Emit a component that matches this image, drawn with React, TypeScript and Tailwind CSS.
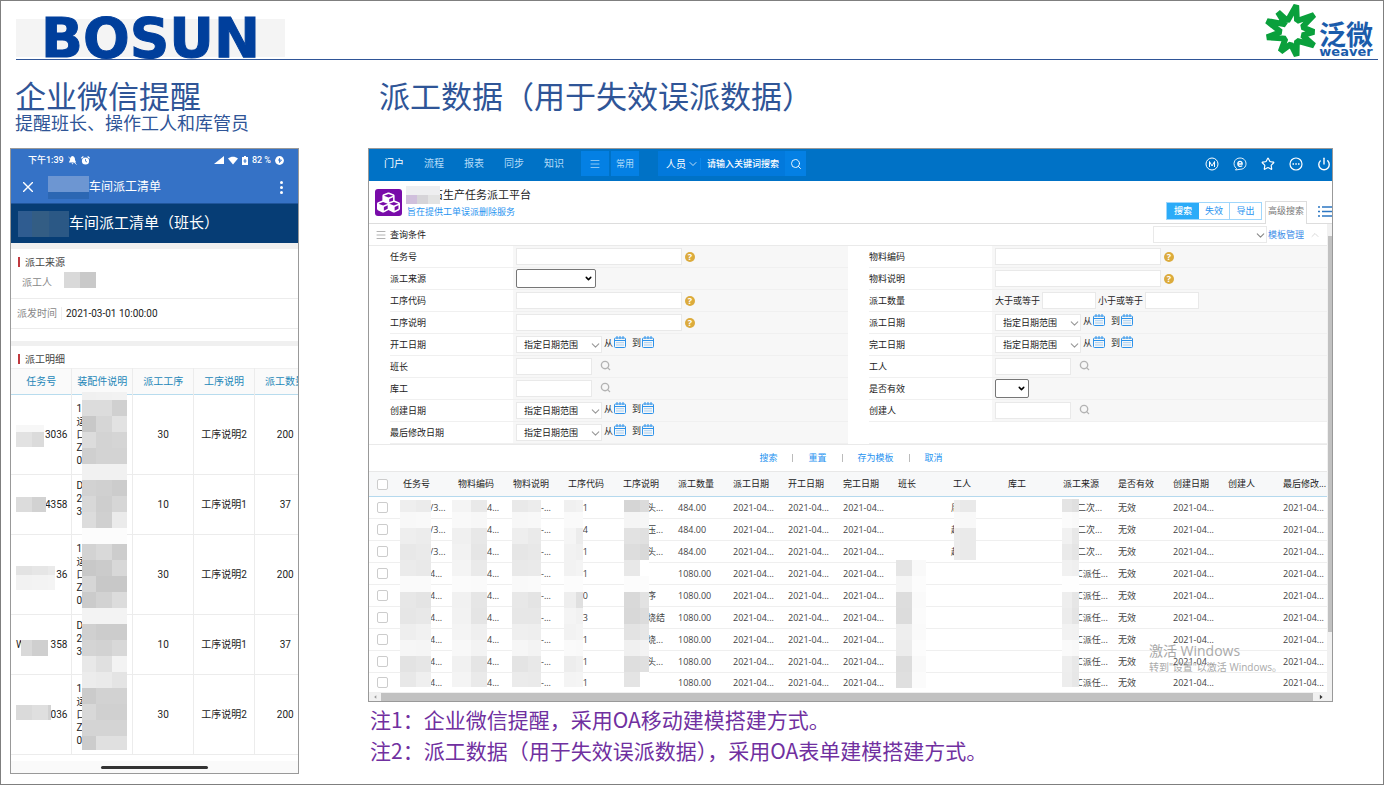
import React from 'react';
import { FaCubes } from 'react-icons/fa';
import { Search, ChevronDown, ChevronUp, Star, Power, Menu } from 'lucide-react';

interface MosaicProps {
  className: string;
  widths: number[];
  heights: number[];
  shades: string[]; // one string per band, two hex digits per block
}

// Grey blocks that hide private data
const Mosaic: React.FC<MosaicProps> = ({ className, widths, heights, shades }) => {
  const width = widths.reduce((a, b) => a + b, 0);
  const height = heights.reduce((a, b) => a + b, 0);
  const blocks: React.ReactNode[] = [];
  let y = 0;
  shades.forEach((band, r) => {
    let x = 0;
    band.split(' ').forEach((s, c) => {
      blocks.push(
        <rect key={`${r}-${c}`} x={x} y={y} width={widths[c]} height={heights[r]} fill={`#${s}${s}${s}`} />
      );
      x += widths[c];
    });
    y += heights[r];
  });
  return (
    <svg
      className={`absolute max-w-none ${className}`}
      width={width}
      height={height}
      shapeRendering="crispEdges"
      aria-hidden="true"
    >
      {blocks}
    </svg>
  );
};

const WeaverLogo = () => (
  <div className="flex h-[54px] items-end gap-[3px] pr-[5px]">
    <svg viewBox="0 0 150 156" className="h-[53px] w-[51px]" aria-hidden="true">
      <path
        d="M38 24 L66 50 L92 4 L94 50 L144 32 L110 68 L144 82 L110 92 L144 122 L94 108 L93 152 L76 118 L46 140 L60 102 L6 98 L46 82 L6 50 L60 60 Z"
        fill="none"
        stroke="#0aa03c"
        strokeWidth="17"
        strokeLinejoin="bevel"
      />
    </svg>
    <div className="flex flex-col items-center text-[#1b5cab]">
      <span className="text-[27px] leading-[27px] font-bold">泛微</span>
      <span className="font-['DejaVu_Sans',sans-serif] text-[13px] leading-[10px] font-bold">weaver</span>
    </div>
  </div>
);

const CalendarIcon = () => (
  <svg viewBox="0 0 12 12" className="size-3 text-[#2e93ea]" fill="none" stroke="currentColor" aria-hidden="true">
    <rect x="0.5" y="2" width="11" height="9.5" rx="1" />
    <path d="M0.5 4.5H11.5M3 0V3M6 0V3M9 0V3" />
    <path d="M2.5 6.7H10M2.5 9H10" strokeDasharray="1 1" strokeOpacity="0.8" />
  </svg>
);

const HelpIcon = () => (
  <span className="flex size-[10px] items-center justify-center rounded-full bg-[#dcab3c] text-[9px] leading-none font-bold text-white">
    ?
  </span>
);

/* ---------- phone ---------- */

interface PhoneRow {
  no: string;
  prefix?: string;
  lines: string[];
  step: string;
  desc: string;
  qty: string;
  height: string;
  mask: MosaicProps;
}

const PHONE_HEADERS = ['任务号', '装配件说明', '派工工序', '工序说明', '派工数量'];

const LONG_PART = ['1', '运', '口', 'Z', '0'];
const SHORT_PART = ['D', '2', '3', '\u00a0'];

const PHONE_ROWS: PhoneRow[] = [
  {
    no: '3036', lines: LONG_PART, step: '30', desc: '工序说明2', qty: '200', height: 'h-[80px]',
    mask: { className: 'left-[5px] top-[30px]', widths: [16, 12], heights: [7, 15], shades: ['f7 f7', 'e2 db'] },
  },
  {
    no: '4358', lines: SHORT_PART, step: '10', desc: '工序说明1', qty: '37', height: 'h-[60px]',
    mask: { className: 'left-[5px] top-[22px]', widths: [16, 14], heights: [15], shades: ['dc d2'] },
  },
  {
    no: '36', lines: LONG_PART, step: '30', desc: '工序说明2', qty: '200', height: 'h-[80px]',
    mask: { className: 'left-[5px] top-[31px]', widths: [16, 16, 7], heights: [9, 15], shades: ['e3 e6 ea', 'f2 f3 f4'] },
  },
  {
    no: '358', prefix: 'W', lines: SHORT_PART, step: '10', desc: '工序说明1', qty: '37', height: 'h-[60px]',
    mask: { className: 'left-[10px] top-[25px]', widths: [11, 16], heights: [16], shades: ['d9 cf'] },
  },
  {
    no: '036', lines: LONG_PART, step: '30', desc: '工序说明2', qty: '200', height: 'h-[80px]',
    mask: { className: 'left-[5px] top-[30px]', widths: [16, 16, 3], heights: [15], shades: ['da df d2'] },
  },
];

const PART_MASK: MosaicProps = {
  className: 'left-[10px] -top-[3px] z-10',
  widths: [14, 16, 15],
  heights: [8, 16, 16, 16, 16, 16, 16, 16, 16, 16, 16, 16, 16, 16, 16, 16, 16, 16, 16, 16, 16, 16, 14],
  shades: [
    'f0 f1 f2', 'dc dc d0', 'c8 d6 e2', 'dc d3 d5', 'cf d3 d3', 'f1 f1 f1', 'd2 d0 cc', 'd8 ce d6',
    'dc d0 eb', 'fc fc fc', 'd3 d9 cd', 'c8 cb d8', 'd6 c8 c8', 'cb d2 dc', 'f3 f3 f3', 'd0 cc cc',
    'd4 d2 d8', 'e8 e0 f3', 'ec ea e4', 'cb d2 d2', 'd8 d0 d0', 'd4 d4 d4', 'cc e0 e0',
  ],
};

const SectionTitle: React.FC<{ text: string }> = ({ text }) => (
  <h3 className="flex h-[22px] items-center gap-[5px] bg-white pt-1 pl-[7px] text-[10px] text-[#444]">
    <span className="h-[10px] w-[2px] bg-[#c0393f]" />
    {text}
  </h3>
);

const Phone = () => (
  <section className="overflow-hidden border border-[#999] bg-white font-['Roboto','Noto_Sans_CJK_SC',sans-serif] text-[10px] leading-[13px] text-[#222]">
    <header className="bg-[#3572c6] text-white">
      <div className="flex h-[22px] items-center gap-1 pr-[14px] pl-[17px] text-[9px] font-medium">
        <span>下午1:39</span>
        <svg viewBox="0 0 9 9" className="size-[9px]" fill="currentColor" aria-hidden="true">
          <path d="M4.5 0C2.5 0.6 2 2 2 4L0.8 6.5H8.2L7 4C7 2 6.5 0.6 4.5 0ZM3.5 7.2H5.5L4.5 8.4Z" />
          <path d="M0.5 1L8.5 8.5" stroke="currentColor" strokeWidth="0.8" />
        </svg>
        <svg viewBox="0 0 9 9" className="size-[9px]" fill="currentColor" aria-hidden="true">
          <circle cx="4.5" cy="5" r="3.6" />
          <path d="M0.4 2.2L2.4 0.5M8.6 2.2L6.6 0.5" stroke="currentColor" strokeWidth="1.2" />
          <path d="M4.5 3V5.2L6 6" stroke="#3572c6" strokeWidth="0.8" fill="none" />
        </svg>
        <span className="flex-1" />
        <svg viewBox="0 0 10 9" className="h-[9px] w-[10px]" fill="currentColor" aria-hidden="true">
          <path d="M10 0V8H0Z" />
        </svg>
        <svg viewBox="0 0 10 9" className="h-[9px] w-[10px]" fill="currentColor" aria-hidden="true">
          <path d="M0 2.5C3 0.2 7 0.2 10 2.5L5 8.5Z" />
        </svg>
        <svg viewBox="0 0 6 9" className="h-[9px] w-[6px]" fill="currentColor" aria-hidden="true">
          <path d="M0 1H2V0H4V1H6V9H0Z" />
          <path d="M3 3V7M1.5 5H4.5" stroke="#3572c6" strokeWidth="1" />
        </svg>
        <span>82 %</span>
        <svg viewBox="0 0 9 9" className="size-[9px]" fill="currentColor" aria-hidden="true">
          <circle cx="4.5" cy="4.5" r="4.4" />
          <path d="M4.5 2V6.5L6.5 4H3" stroke="#3572c6" strokeWidth="0.9" fill="none" />
        </svg>
      </div>
      <div className="flex h-8 items-center pr-[15px] pl-3 text-[12px]">
        <button type="button" aria-label="关闭">
          <svg viewBox="0 0 10 10" className="size-[10px]" stroke="currentColor" strokeWidth="1.4" aria-hidden="true">
            <path d="M0 0L10 10M10 0L0 10" />
          </svg>
        </button>
        <span className="mt-[1px] ml-[15px] flex h-[23px] w-[41px] flex-col bg-[#2c67b3]">
          <span className="h-4 bg-[#6d96d2]" />
        </span>
        <h2 className="flex-1">车间派工清单</h2>
        <button type="button" aria-label="更多" className="flex flex-col gap-[2px]">
          <span className="size-[3px] rounded-full bg-white" />
          <span className="size-[3px] rounded-full bg-white" />
          <span className="size-[3px] rounded-full bg-white" />
        </button>
      </div>
    </header>

    <div className="flex h-10 items-center border-t border-[#1f559b] bg-[#063d75] pl-[7px] text-[15px] text-white">
      <span className="flex h-[26px] w-[51px] bg-[#2b5885]">
        <span className="w-[14px] bg-[#2f5c90]" />
        <span className="w-[17px] bg-[#335d84]" />
      </span>
      车间派工清单（班长）
    </div>

    <div className="h-[6px] bg-[#f0f0f0]" />
    <SectionTitle text="派工来源" />
    <div className="flex h-[28px] items-center border-b border-[#ececec] pb-1 pl-[11px] text-[#888]">
      <span className="w-[42px]">派工人</span>
      <span className="mb-[5px] flex h-4 w-8 bg-[#c9c9c9]">
        <span className="w-4 bg-[#d9d9d9]" />
      </span>
    </div>
    <div className="flex h-[30px] items-center border-b border-[#ececec] pl-[6px] text-[#888]">
      <span className="w-[45px] border-r border-[#eee]">派发时间</span>
      <span className="pl-1 text-[#222]">2021-03-01 10:00:00</span>
    </div>
    <div className="h-3" />
    <div className="h-[5px] bg-[#f0f0f0]" />
    <SectionTitle text="派工明细" />

    <table className="w-[305px] table-fixed border-collapse">
      <thead>
        <tr className="h-[26px] border-t border-b border-t-[#f0f0f0] border-b-[#b8dcee] bg-[#fafafa] text-[#2487b8]">
          {PHONE_HEADERS.map(h => (
            <th key={h} className="border-r border-[#ececec] p-0 text-center font-normal whitespace-nowrap">
              {h}
            </th>
          ))}
        </tr>
      </thead>
      <tbody>
        {PHONE_ROWS.map((row, i) => (
          <tr key={i} className={`border-b border-[#ececec] ${row.height}`}>
            <td className="relative border-r border-[#ececec] py-0 pr-1 pl-[5px]">
              <div className="flex justify-between">
                <span>{row.prefix}</span>
                <span>{row.no}</span>
              </div>
              <Mosaic {...row.mask} />
            </td>
            <td className="relative border-r border-[#ececec] py-0 pr-0 pl-1">
              {row.lines.map((line, n) => (
                <div key={n}>{line}</div>
              ))}
              {i === 0 && <Mosaic {...PART_MASK} />}
            </td>
            <td className="border-r border-[#ececec] p-0 text-center">{row.step}</td>
            <td className="border-r border-[#ececec] p-0 text-center">{row.desc}</td>
            <td className="p-0 text-center">{row.qty}</td>
          </tr>
        ))}
      </tbody>
    </table>
    <div className="h-[6px]" />
    <div className="flex h-3 items-center justify-center bg-[#fafafa]">
      <span className="h-[3px] w-[107px] rounded-full bg-[#333]" />
    </div>
  </section>
);

/* ---------- OA page ---------- */

type FieldKind = 'text' | 'select' | 'shortSelect' | 'date' | 'person' | 'range' | 'none';

interface Field {
  id: string;
  label: string;
  kind: FieldKind;
}

const FIELDS: Field[] = [
  { id: 'taskNo', label: '任务号', kind: 'text' },
  { id: 'materialCode', label: '物料编码', kind: 'text' },
  { id: 'source', label: '派工来源', kind: 'select' },
  { id: 'materialDesc', label: '物料说明', kind: 'text' },
  { id: 'stepCode', label: '工序代码', kind: 'text' },
  { id: 'quantity', label: '派工数量', kind: 'range' },
  { id: 'stepDesc', label: '工序说明', kind: 'text' },
  { id: 'dispatchDate', label: '派工日期', kind: 'date' },
  { id: 'startDate', label: '开工日期', kind: 'date' },
  { id: 'finishDate', label: '完工日期', kind: 'date' },
  { id: 'leader', label: '班长', kind: 'person' },
  { id: 'worker', label: '工人', kind: 'person' },
  { id: 'keeper', label: '库工', kind: 'person' },
  { id: 'valid', label: '是否有效', kind: 'shortSelect' },
  { id: 'createDate', label: '创建日期', kind: 'date' },
  { id: 'creator', label: '创建人', kind: 'person' },
  { id: 'updateDate', label: '最后修改日期', kind: 'date' },
  { id: 'blank', label: '', kind: 'none' },
];

const FieldControl: React.FC<{ field: Field }> = ({ field }) => {
  const { id, kind, label } = field;

  if (kind === 'text') {
    return (
      <>
        <input id={id} type="text" className="h-[17px] w-[166px] border border-[#e9e9e9] bg-white px-1" />
        <span className="ml-[1px]">
          <HelpIcon />
        </span>
      </>
    );
  }
  if (kind === 'select' || kind === 'shortSelect') {
    return (
      <span className="relative">
        <select
          id={id}
          className={`block h-[19px] appearance-none rounded-[2px] border border-[#767676] bg-white ${
            kind === 'select' ? 'w-[80px]' : 'w-[34px]'
          }`}
        />
        <ChevronDown className="pointer-events-none absolute top-[5px] right-[3px] size-[9px] text-black" strokeWidth={4} />
      </span>
    );
  }
  if (kind === 'date') {
    return (
      <>
        <span className="relative">
          <select id={id} className="block h-[17px] w-[86px] appearance-none border border-[#e9e9e9] bg-white pl-[7px]">
            <option>指定日期范围</option>
          </select>
          <ChevronDown className="pointer-events-none absolute top-[3px] right-0 size-[13px] text-[#999]" />
        </span>
        <span className="flex items-center pb-1">
          从
          <button type="button" aria-label={`${label}开始`} className="ml-[1px] pb-[2px]">
            <CalendarIcon />
          </button>
          <span className="ml-[6px]">到</span>
          <button type="button" aria-label={`${label}结束`} className="ml-[1px] pb-[2px]">
            <CalendarIcon />
          </button>
        </span>
      </>
    );
  }
  if (kind === 'person') {
    return (
      <>
        <input id={id} type="text" className="h-[17px] w-[76px] border border-[#e9e9e9] bg-white px-1" />
        <button type="button" aria-label={`选择${label}`} className="ml-[6px] pb-[2px] text-[#b3b3b3]">
          <Search className="size-[11px]" strokeWidth={3} />
        </button>
      </>
    );
  }
  if (kind === 'range') {
    return (
      <>
        <label htmlFor={id}>大于或等于</label>
        <input id={id} type="text" className="h-[17px] w-[54px] border border-[#e9e9e9] bg-white px-1" />
        <label htmlFor={`${id}Max`}>小于或等于</label>
        <input id={`${id}Max`} type="text" className="h-[17px] w-[54px] border border-[#e9e9e9] bg-white px-1" />
      </>
    );
  }
  return null;
};

const COLUMNS = [
  '任务号', '物料编码', '物料说明', '工序代码', '工序说明', '派工数量', '派工日期', '开工日期', '完工日期',
  '班长', '工人', '库工', '派工来源', '是否有效', '创建日期', '创建人', '最后修改...',
];

const CELL_CLASS: Record<number, string> = {
  0: 'pl-[32px]',
  1: 'pl-[34px]',
  2: 'pl-[33px]',
  3: 'pr-[30px] text-right',
  4: 'pl-[29px]',
  10: 'pl-[3px]',
  12: 'pl-[19px]',
};

const DATE = '2021-04...';

const makeRow = (no: string, code: string, desc: string, qty: string, worker: string, source: string) => [
  no, '4...', '-...', code, desc, qty, DATE, DATE, DATE, '', worker, '', source, '无效', DATE, '', DATE,
];

const ROWS = [
  makeRow('/3...', '1', '头...', '484.00', '周', '二次...'),
  makeRow('/3...', '4', '压...', '484.00', '赵', '二次...'),
  makeRow('/3...', '1', '头...', '484.00', '赵', '二次...'),
  makeRow('4...', '1', '', '1080.00', '', 'C派任...'),
  makeRow('4...', '00', '序', '1080.00', '', 'C派任...'),
  makeRow('4...', '3', '烧结', '1080.00', '', 'C派任...'),
  makeRow('4...', '1', '烧...', '1080.00', '', 'C派任...'),
  makeRow('4...', '1', '头...', '1080.00', '', 'C派任...'),
  makeRow('4...', '1', '', '1080.00', '', 'C派任...'),
];

const BANDS = [12, 16, 16, 16, 16, 16, 16, 16, 16, 16, 16, 15];

// Keyed by column index, anchored in the first body row
const MASKS: Record<number, MosaicProps> = {
  0: {
    className: 'left-[2px] top-[3px]', widths: [16, 15], heights: BANDS,
    shades: ['ee eb', 'f8 f9', 'ee ec', 'e8 ea', 'eb e9', 'fa fa', 'e7 e4', 'e6 e8', 'ee f1', 'f6 f5', 'e3 e6', 'e8 ef'],
  },
  1: {
    className: '-left-[1px] top-[3px]', widths: [19, 16], heights: BANDS,
    shades: ['f4 e9', 'f9 f7', 'f0 e8', 'f2 e6', 'f4 ea', 'fb fa', 'f1 e6', 'f2 e5', 'f4 ef', 'f8 f3', 'f1 e5', 'f4 ea'],
  },
  2: {
    className: 'left-1 top-[3px]', widths: [16, 13], heights: BANDS,
    shades: ['e9 ec', 'f7 f8', 'ee ea', 'e6 e8', 'e9 ea', 'f9 fa', 'e8 e4', 'e7 e7', 'ef ee', 'f6 f3', 'e4 e8', 'eb ea'],
  },
  3: {
    className: 'left-[1px] top-[3px]', widths: [12, 7], heights: BANDS,
    shades: ['f0 f2', 'fa fa', 'f5 ec', 'f2 f0', 'f2 f4', 'fc fc', 'ee e0', 'f4 f1', 'f2 f4', 'fa f9', 'ed f0', 'f4 f5'],
  },
  4: {
    className: 'left-[6px] top-[3px]', widths: [16, 9], heights: BANDS,
    shades: ['d5 db', 'f5 f6', 'e2 e0', 'dd d9', 'e8 ff', 'fc fc', 'd9 e2', 'd8 dc', 'e3 e6', 'f0 f3', 'de e0', 'e4 ff'],
  },
  9: {
    className: 'left-[3px] top-[63px]', widths: [16, 14], heights: [16, 16, 16, 16, 16, 16, 16, 16],
    shades: ['e5 f9', 'f5 fc', 'dd fa', 'dc fb', 'ee fa', 'ec fc', 'dd f9', 'df fb'],
  },
  10: {
    className: 'left-[6px] top-[3px]', widths: [6, 16], heights: [12, 16, 32],
    shades: ['ed e9', 'f9 f8', 'ec ea'],
  },
  12: {
    className: 'left-1 top-[2px]', widths: [10, 7], heights: [13, 16, 16, 16, 16, 16, 16, 16, 16, 16, 16, 15],
    shades: ['e4 e0', 'fb f9', 'f1 e8', 'ea e5', 'f1 ef', 'fe fe', 'ee e6', 'ec e4', 'f2 f1', 'fa f8', 'ee e8', 'ed e7'],
  },
};

const OaPage = () => (
  <section className="relative overflow-hidden border border-[#999] bg-white font-['Open_Sans','Noto_Sans_CJK_SC',sans-serif] text-[9px] leading-[12px] text-[#222]">
    <nav className="flex h-8 items-start bg-[#0072c6] pt-[2px] pr-[1px] pl-[5px] text-[10px] text-[#b5dcf8]">
      {['门户', '流程', '报表', '同步', '知识'].map((item, i) => (
        <a key={item} href="#" className={`w-10 text-center leading-[24px] ${i === 0 ? 'text-white' : ''}`}>
          {item}
        </a>
      ))}
      <button type="button" aria-label="菜单" className="ml-[7px] flex h-[25px] w-7 items-center justify-center bg-[#0480e4]">
        <Menu className="size-3" strokeWidth={1.5} />
      </button>
      <button type="button" className="ml-[2px] h-[25px] w-7 bg-[#0480e4] text-[9px]">
        常用
      </button>
      <div className="ml-[19px] flex h-[25px] w-[148px] items-center bg-[#0279dc] text-white">
        <button type="button" className="flex w-[43px] items-center gap-[1px] border-r border-[#0a86ea] pl-2">
          人员
          <ChevronDown className="size-3" strokeWidth={1.5} />
        </button>
        <input
          type="text"
          aria-label="搜索"
          placeholder="请输入关键词搜索"
          className="min-w-0 flex-1 pl-[6px] text-[9px] font-medium placeholder:text-white"
        />
        <button type="button" aria-label="搜索" className="flex h-full w-[21px] items-center justify-center bg-[#0480e4]">
          <Search className="size-3" strokeWidth={1.8} />
        </button>
      </div>
      <div className="ml-auto flex h-[25px] items-center gap-[14px] text-white">
        <button type="button" aria-label="M">
          <svg viewBox="0 0 14 14" className="size-[14px]" fill="none" stroke="currentColor" aria-hidden="true">
            <circle cx="7" cy="7" r="6" />
            <path d="M4.5 10V4.5L7 9L9.5 4.5V10" />
          </svg>
        </button>
        <button type="button" aria-label="e-message">
          <svg viewBox="0 0 14 14" className="size-[14px]" fill="none" stroke="currentColor" aria-hidden="true">
            <path d="M3.5 11.5C-1 8 1 1 7 1C15 1 15 12.5 7 12.3L2.5 13Z" strokeWidth="0.9" />
            <path d="M5 7H9.2C9.2 3.5 4.8 3.5 4.8 7C4.8 9.8 8 9.8 9.2 8.6" strokeWidth="1.3" />
          </svg>
        </button>
        <button type="button" aria-label="收藏">
          <Star className="size-[14px]" strokeWidth={2} />
        </button>
        <button type="button" aria-label="更多">
          <svg viewBox="0 0 14 14" className="size-[14px]" fill="none" stroke="currentColor" aria-hidden="true">
            <circle cx="7" cy="7" r="6" strokeWidth="1.2" />
            <path d="M3.5 7H5M6.3 7H7.8M9 7H10.5" strokeWidth="1.5" />
          </svg>
        </button>
        <button type="button" aria-label="退出">
          <Power className="size-[14px]" strokeWidth={2.4} />
        </button>
      </div>
    </nav>

    <header className="flex h-[43px] items-end justify-between border-b border-[#ddd]">
      <div className="flex h-full items-center gap-1 pl-[6px]">
        <span className="flex size-[27px] items-center justify-center rounded-[3px] bg-[#780ba9] text-white">
          <FaCubes className="size-[23px]" />
        </span>
        <div className="pt-[1px]">
          <h2 className="flex items-center text-[11px] leading-[17px]">
            <svg className="relative -mr-2 h-[18px] w-[34px] shrink-0" viewBox="0 0 34 18" shapeRendering="crispEdges" aria-hidden="true">
              <path d="M0 0H34V9H0Z" fill="#eeeef0" />
              <path d="M0 9H11V18H0Z" fill="#d0bfdc" />
              <path d="M11 9H22V18H11Z" fill="#d6d4d8" />
              <path d="M22 9H34V18H22Z" fill="#e3e3e3" />
            </svg>
            石生产任务派工平台
          </h2>
          <p className="pl-[1px] leading-[16px] text-[#1f93f0]">旨在提供工单误派删除服务</p>
        </div>
      </div>
      <div className="flex items-end text-[#1f93f0]">
        <div className="mb-[3px] flex h-[18px] border border-[#9fd6fb]">
          <button type="button" className="w-8 bg-[#2babf8] font-medium text-white">搜索</button>
          <button type="button" className="w-[30px]">失效</button>
          <button type="button" className="w-8 border-l border-[#9fd6fb]">导出</button>
        </div>
        <button type="button" className="-mb-[1px] ml-[3px] h-[23px] w-[42px] border border-b-0 border-[#ddd] bg-white pb-1 whitespace-nowrap text-[#777]">
          高级搜索
        </button>
        <svg viewBox="0 0 14 12" className="mb-[6px] ml-[11px] h-3 w-[14px] text-[#2d77c2]" stroke="currentColor" strokeWidth="1.3" aria-hidden="true">
          <path d="M0 2H2M4 2H14M0 6.5H2M4 6.5H14M0 11H2M4 11H14" />
        </svg>
      </div>
    </header>

    <div className="flex">
      <div className="min-w-0 flex-1">
        <div className="flex h-[22px] items-center border-b border-[#eaeaea] pr-[6px] pl-[6px]">
          <Menu className="size-3 text-[#999]" strokeWidth={1.5} />
          <h3 className="ml-[3px]">查询条件</h3>
          <span className="relative ml-auto">
            <select aria-label="模板" className="block h-[17px] w-[114px] appearance-none border border-[#e9e9e9] bg-white" />
            <ChevronDown className="pointer-events-none absolute top-[3px] right-0 size-[13px] text-[#888]" />
          </span>
          <a href="#" className="ml-[1px] text-[#3d8ce8]">模板管理</a>
          <ChevronUp className="ml-[5px] size-3 text-[#ccc]" strokeWidth={1.5} />
        </div>

        <form>
          <div className="grid grid-cols-[144px_1fr_144px_1fr]">
            {FIELDS.map(field => (
              <React.Fragment key={field.id}>
                <div className="flex h-[22px] items-center pl-[21px]">
                  <label htmlFor={field.id} className="flex h-full flex-1 items-center border-b border-[#f0f0f0]">
                    {field.label}
                  </label>
                </div>
                <div
                  className={`flex h-[22px] items-center gap-[2px] border-b border-[#f0f0f0] pl-[3px] ${
                    field.kind === 'none' ? '' : 'bg-[#f7f7f7]'
                  }`}
                >
                  <FieldControl field={field} />
                </div>
              </React.Fragment>
            ))}
          </div>
          <div className="flex h-[27px] items-center justify-center gap-[15px] border-t border-[#eaeaea] pl-[6px] text-[#1f93f0]">
            <button type="button">搜索</button>
            <span className="h-2 w-px bg-[#bbb]" />
            <button type="button">重置</button>
            <span className="h-2 w-px bg-[#bbb]" />
            <button type="button">存为模板</button>
            <span className="h-2 w-px bg-[#bbb]" />
            <button type="button">取消</button>
          </div>
        </form>

        <table className="w-full table-fixed border-collapse">
          <thead>
            <tr className="h-[25px] border-t border-b border-t-[#e8e8e8] border-b-[#b5d9ee] bg-[#f7f8f9]">
              <th className="w-[29px] py-0 pr-0 pl-2">
                <input type="checkbox" aria-label="全选" className="block size-[11px] appearance-none rounded-[2px] border border-[#ccc] bg-white" />
              </th>
              {COLUMNS.map(c => (
                <th key={c} className="w-[55px] py-0 pr-0 pl-[5px] text-left font-normal whitespace-nowrap last:w-auto">
                  {c}
                </th>
              ))}
            </tr>
          </thead>
          <tbody>
            {ROWS.map((row, i) => (
              <tr key={i} className="h-[22px] border-b border-[#efefef] text-[#444] last:h-[20px]">
                <td className="py-0 pr-0 pl-2">
                  <input type="checkbox" aria-label={`选择第${i + 1}行`} className="block size-[11px] appearance-none rounded-[2px] border border-[#ccc] bg-white" />
                </td>
                {row.map((text, c) => (
                  <td
                    key={c}
                    className={`py-0 whitespace-nowrap ${i === 0 ? 'relative' : ''} ${CELL_CLASS[c] ?? 'pl-[5px]'}`}
                  >
                    {text}
                    {i === 0 && MASKS[c] && <Mosaic {...MASKS[c]} />}
                  </td>
                ))}
              </tr>
            ))}
          </tbody>
        </table>
      </div>
      <div className="flex w-[5px] flex-col bg-[#f1f1f1] pt-3 pl-[1px]">
        <div className="h-[396px] bg-[#c1c1c1]" />
      </div>
    </div>

    <div className="flex h-2 items-center bg-[#f1f1f1] pr-[7px]">
      <svg viewBox="0 0 12 9" className="h-2 w-3" fill="#999" aria-hidden="true">
        <path d="M7.5 2.5V6.5L5 4.5Z" />
      </svg>
      <div className="h-2 flex-1 bg-[#c1c1c1]" />
      <svg viewBox="0 0 12 9" className="h-2 w-3" fill="#333" aria-hidden="true">
        <path d="M7 2V7L10 4.5Z" />
      </svg>
    </div>

    <div className="pointer-events-none absolute right-[50px] bottom-[27px] text-[#aaa]">
      <p className="text-[14px] leading-[19px]">激活 Windows</p>
      <p className="text-[10px] leading-[14px]">转到"设置"以激活 Windows。</p>
    </div>
  </section>
);

const App: React.FC = () => {
  return (
    <div className="min-h-screen border border-[#7f7f7f] bg-white font-['Noto_Sans_CJK_SC',sans-serif] text-[#2f5597]">
      <header className="mr-[5px] ml-[15px] flex h-[59px] items-end justify-between border-b border-[#2f5597] pb-[2px]">
        <h1 className="flex h-[38px] w-[269px] items-center justify-center bg-[#f4f4f4] font-['DejaVu_Sans',sans-serif] text-[55px] leading-none font-bold text-[#003f9c] [-webkit-text-stroke:1px_#003f9c]">
          BOSUN
        </h1>
        <WeaverLogo />
      </header>

      <main className="flex gap-[69px] pr-[50px] pl-[9px]">
        <div className="w-[289px] shrink-0">
          <div className="h-[88px] pt-[15px] pl-[5px]">
            <h2 className="text-[31px] leading-[40px]">企业微信提醒</h2>
            <p className="text-[18px] leading-[14px]">提醒班长、操作工人和库管员</p>
          </div>
          <Phone />
        </div>

        <div className="min-w-0 flex-1">
          <div className="h-[88px] pt-[15px] pl-[11px]">
            <h2 className="text-[31px] leading-[40px]">派工数据（用于失效误派数据）</h2>
          </div>
          <OaPage />
          <div className="pt-[2px] pl-[2px] text-[21px] leading-[31px] text-[#7030a0]">
            <p>注1：企业微信提醒，采用OA移动建模搭建方式。</p>
            <p>注2：派工数据（用于失效误派数据），采用OA表单建模搭建方式。</p>
          </div>
        </div>
      </main>
    </div>
  );
};

export default App;
